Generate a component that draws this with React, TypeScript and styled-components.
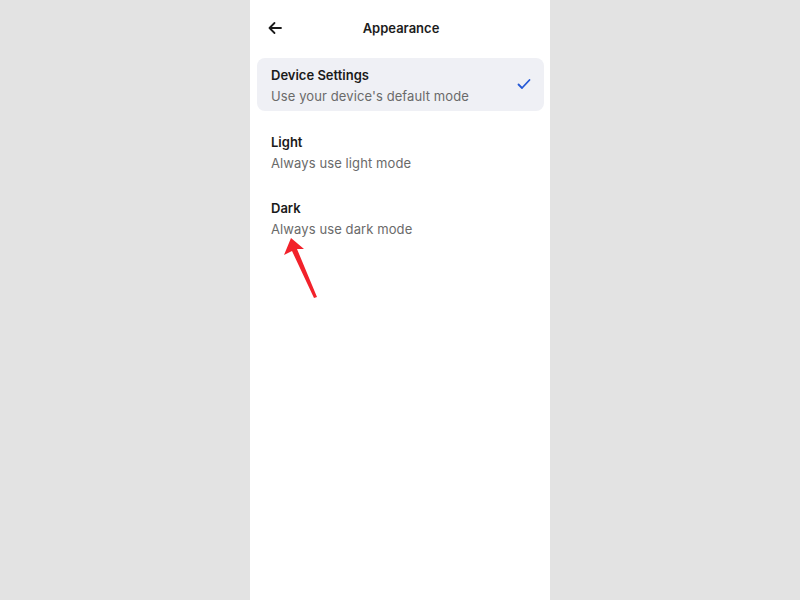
import React from "react";
import styled, { createGlobalStyle } from "styled-components";

const Global = createGlobalStyle`
  html, body { margin: 0; padding: 0; background: #e3e3e3; }
  body { font-family: Inter, "Noto Sans", sans-serif; }
`;

const Page = styled.div`
  display: flex;
  justify-content: center;
  height: 600px;
  background: #e3e3e3;
`;

const Panel = styled.div`
  position: relative;
  width: 300px;
  height: 600px;
  background: #ffffff;
  display: flex;
  flex-direction: column;
`;

const Header = styled.div`
  height: 56px;
  display: grid;
  grid-template-columns: 40px 1fr 40px;
  align-items: center;
  padding: 0 10px 0 16px;
`;

const BackButton = styled.button`
  border: none;
  background: none;
  padding: 0;
  width: 18px;
  height: 18px;
  display: flex;
  align-items: center;
  justify-content: center;
  color: #1b1b1b;
`;

const Title = styled.div`
  text-align: center;
  font-size: 13px;
  font-weight: 600;
  color: #1c1c1c;
  margin-left: -4px;
`;

const List = styled.div`
  display: flex;
  flex-direction: column;
  gap: 13.5px;
  padding: 2px 6px 0 7px;
`;

const Row = styled.div<{ $selected?: boolean }>`
  height: 53px;
  box-sizing: border-box;
  padding: 9px 13px 0 14px;
  border-radius: 8px;
  background: ${(p) => (p.$selected ? "#eff0f5" : "transparent")};
  display: flex;
  align-items: flex-start;
  justify-content: space-between;
`;

const Texts = styled.div`
  display: flex;
  flex-direction: column;
  gap: 4px;
`;

const RowTitle = styled.div`
  font-size: 13px;
  font-weight: 600;
  color: #1a1a1a;
  line-height: 16px;
`;

const RowSub = styled.div`
  font-size: 13px;
  letter-spacing: 0.1px;
  color: #6a6a6a;
  line-height: 18px;
`;

const Check = styled.div`
  margin-top: 11px;
  color: #2458d6;
  display: flex;
`;

const Annotation = styled.svg`
  position: absolute;
  left: 30px;
  top: 231px;
  pointer-events: none;
`;

const options = [
  { title: "Device Settings", sub: "Use your device's default mode", selected: true },
  { title: "Light", sub: "Always use light mode" },
  { title: "Dark", sub: "Always use dark mode" },
];

export default function App() {
  return (
    <>
      <Global />
      <Page>
        <Panel>
          <Header>
            <BackButton aria-label="Back">
              <svg width="16" height="16" viewBox="0 0 16 16" fill="none">
                <path d="M14 8H2.5M7.5 3L2.5 8L7.5 13" stroke="currentColor" strokeWidth="1.8" strokeLinecap="round" strokeLinejoin="round" />
              </svg>
            </BackButton>
            <Title>Appearance</Title>
            <span />
          </Header>
          <List>
            {options.map((o) => (
              <Row key={o.title} $selected={o.selected}>
                <Texts>
                  <RowTitle>{o.title}</RowTitle>
                  <RowSub>{o.sub}</RowSub>
                </Texts>
                {o.selected && (
                  <Check>
                    <svg width="14" height="12" viewBox="0 0 14 12" fill="none">
                      <path d="M1.5 6.5L5 10L12.5 2" stroke="currentColor" strokeWidth="1.8" strokeLinecap="round" strokeLinejoin="round" />
                    </svg>
                  </Check>
                )}
              </Row>
            ))}
          </List>
          <Annotation width="50" height="75" viewBox="0 0 50 75">
            <path d="M11 7 L4 24 L12 20 L34 67 L37 66 L17 18 L24 18 Z" fill="#f2222b" />
          </Annotation>
        </Panel>
      </Page>
    </>
  );
}
